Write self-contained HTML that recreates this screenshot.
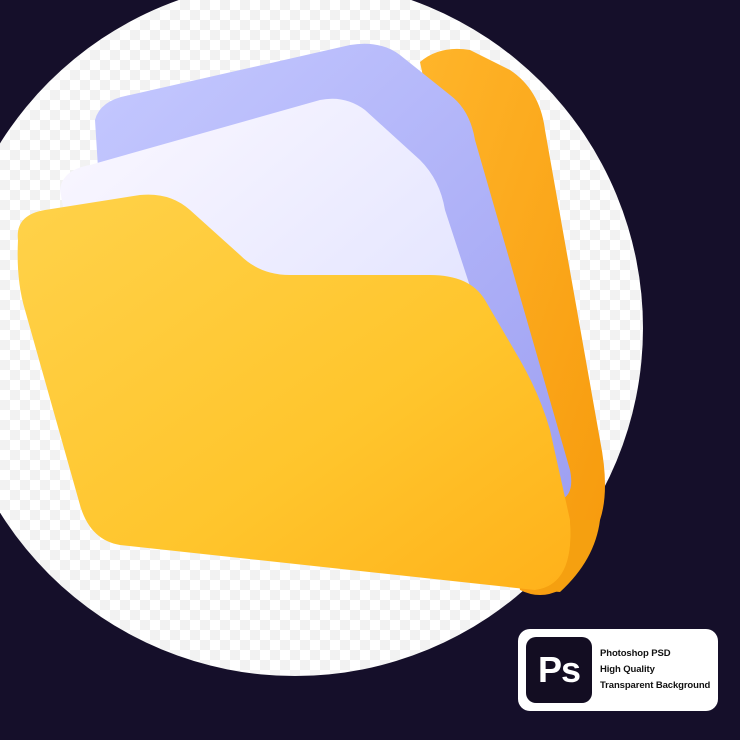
<!DOCTYPE html>
<html><head><style>
html,body{margin:0;padding:0;}
body{width:740px;height:740px;background:#150f2a;position:relative;overflow:hidden;font-family:"Liberation Sans",sans-serif;}
.badge{position:absolute;left:518px;top:629px;width:200px;height:82px;background:#fff;border-radius:12px;}
.ps{position:absolute;left:8px;top:8px;width:66px;height:66px;background:#130d22;border-radius:10px;color:#fff;font-weight:bold;font-size:36px;line-height:66px;text-align:center;letter-spacing:-1px;}
.txt{position:absolute;left:82px;top:17px;font-size:9.5px;font-weight:bold;color:#111;line-height:16px;white-space:nowrap;letter-spacing:-0.1px;}
</style></head><body>
<svg width="740" height="740" style="position:absolute;left:0;top:0">
<defs>
<pattern id="ck" width="20" height="20" patternUnits="userSpaceOnUse">
<rect width="20" height="20" fill="#ffffff"/><rect width="10" height="10" fill="#f2f2f2"/><rect x="10" y="10" width="10" height="10" fill="#f2f2f2"/>
</pattern>
<linearGradient id="yel" x1="0" y1="0" x2="1" y2="1"><stop offset="0" stop-color="#ffd24a"/><stop offset="0.6" stop-color="#ffc52c"/><stop offset="1" stop-color="#ffb11a"/></linearGradient>
<linearGradient id="org" x1="0" y1="0" x2="1" y2="1"><stop offset="0" stop-color="#ffb52a"/><stop offset="1" stop-color="#f79a0c"/></linearGradient>
<linearGradient id="pur" x1="0" y1="0" x2="1" y2="1"><stop offset="0" stop-color="#c5c9ff"/><stop offset="1" stop-color="#9ea0f2"/></linearGradient>
<linearGradient id="lp" x1="0" y1="0" x2="1" y2="1"><stop offset="0" stop-color="#fbf8ff"/><stop offset="1" stop-color="#d9dcff"/></linearGradient>
</defs>
<circle cx="295" cy="328" r="348" fill="url(#ck)"/>
<path d="M420 62 Q440 45 470 50 L510 70 Q540 90 545 130 L600 440 Q610 490 600 520 L560 590 Q540 600 520 590 L470 300 Z" fill="url(#org)"/>
<path d="M95 120 Q100 100 130 95 L350 45 Q380 40 400 55 L450 95 Q470 110 475 140 L570 470 Q575 495 560 500 L100 200 Z" fill="url(#pur)"/>
<path d="M60 190 Q62 170 90 165 L320 100 Q345 95 365 110 L420 160 Q440 180 445 210 L540 500 L80 300 Z" fill="url(#lp)"/>
<path d="M18 240 Q15 215 45 210 L140 195 Q170 192 190 210 L240 255 Q260 275 290 275 L430 275 Q470 275 485 300 L520 360 Q540 395 550 430 L570 520 Q575 585 535 590 L120 545 Q90 540 80 505 L25 310 Q16 280 18 240 Z" fill="url(#yel)"/>
<path d="M535 590 Q575 585 570 520 L600 520 Q595 560 560 592 Z" fill="#f5a010"/>
</svg>
<div class="badge"><div class="ps">Ps</div><div class="txt">Photoshop PSD<br>High Quality<br>Transparent Background</div></div>
</body></html>
